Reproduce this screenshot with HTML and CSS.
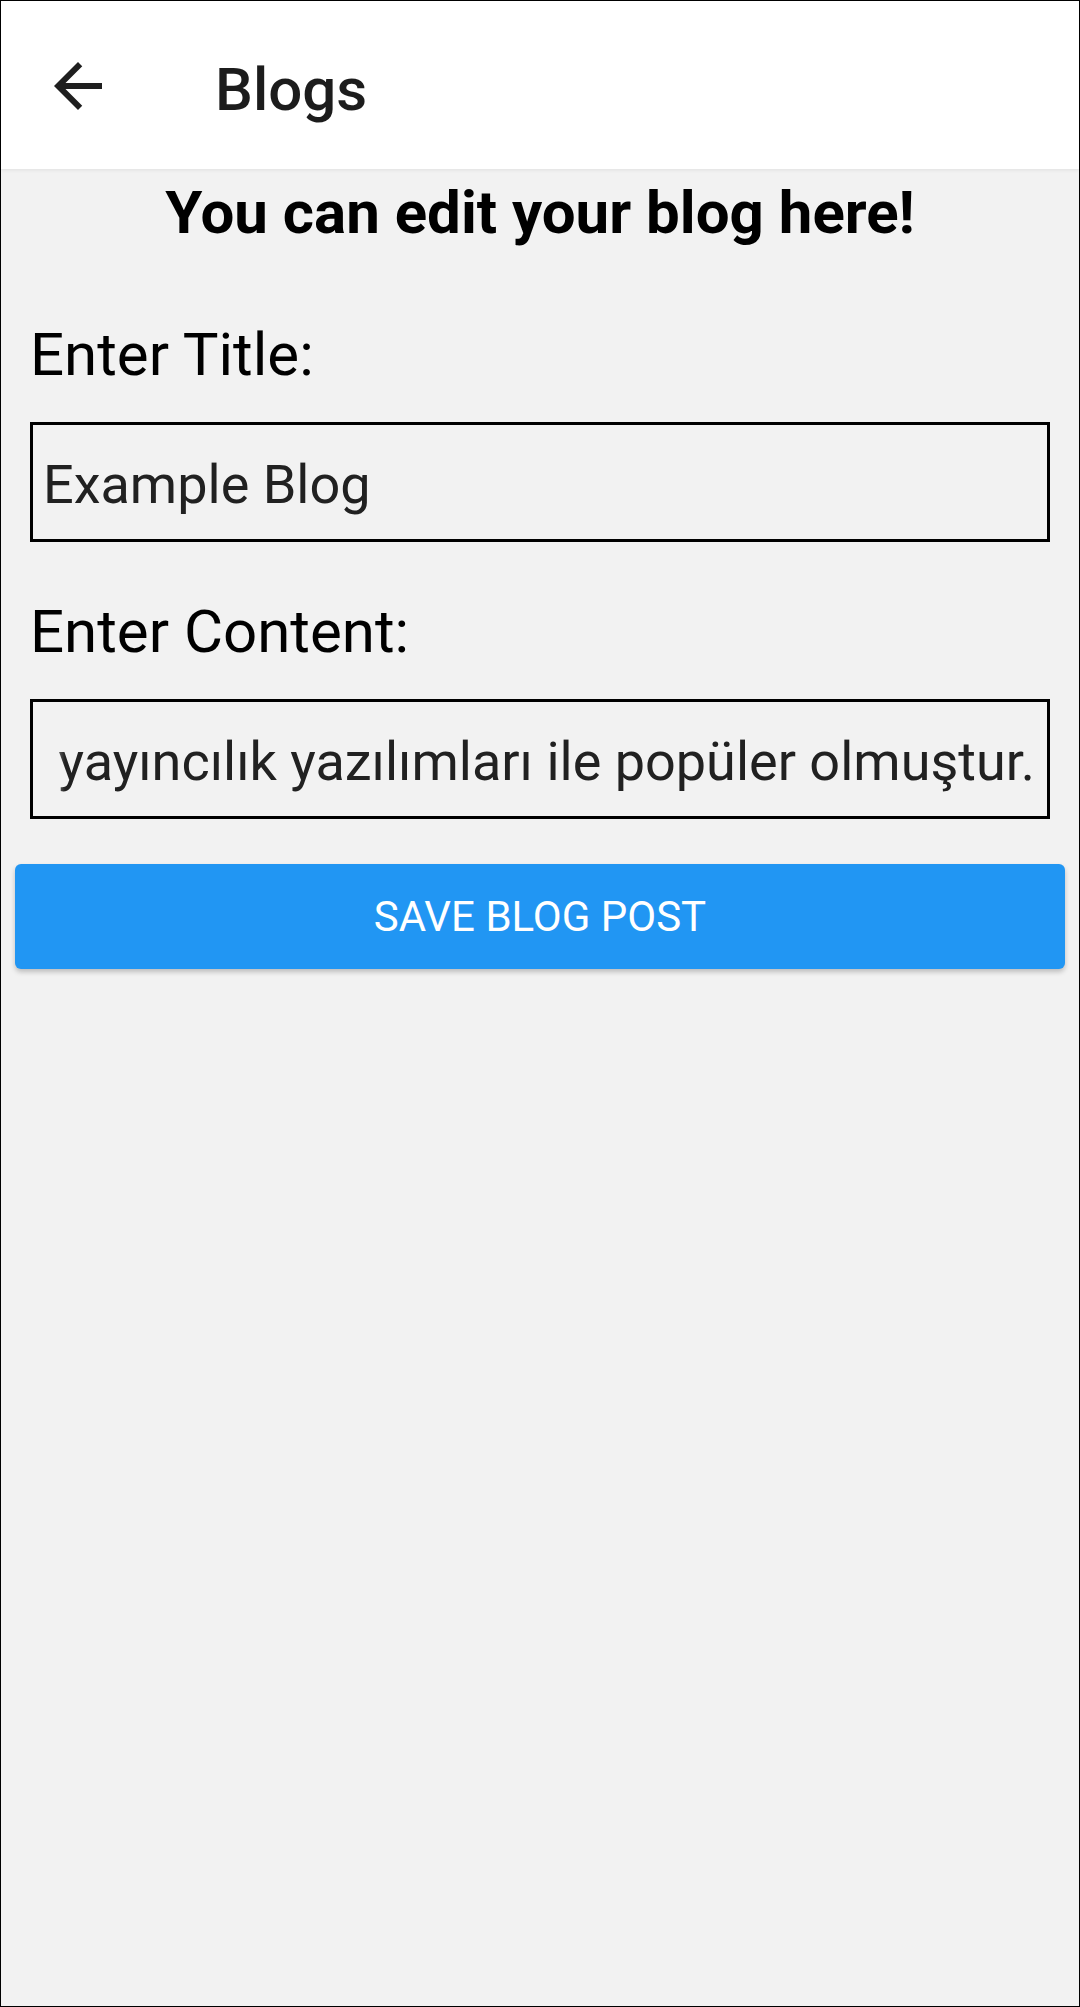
FILE: index.html
```html
<!DOCTYPE html>
<html lang="en">
<head>
  <meta charset="UTF-8" />
  <meta name="viewport" content="width=device-width, initial-scale=1" />
  <title>Blogs</title>
  <link rel="stylesheet" href="styles.css">
</head>
<body>
  <!-- App Bar -->
  <header class="app-bar">
    <svg class="back-icon" viewBox="0 0 24 24" aria-hidden="true">
      <path d="M20 11H7.83l5.59-5.59L12 4l-8 8 8 8 1.41-1.41L7.83 13H20v-2z" />
    </svg>
    <span class="app-title">Blogs</span>
  </header>

  <h1 class="page-heading">You can edit your blog here!</h1>

  <!-- Edit Form -->
  <form class="edit-form">
    <div class="form-group">
      <label class="field-label">Enter Title:</label>
      <div class="field">
        <div class="field-text">Example Blog</div>
      </div>
    </div>
    <div class="form-group">
      <label class="field-label">Enter Content:</label>
      <div class="field">
        <div class="field-text scrolled">Aldus PageMaker gibi Lorem Ipsum sürümleri içeren masaüstü yayıncılık yazılımları ile popüler olmuştur.</div>
      </div>
    </div>
    <button type="button" class="save-button">Save Blog Post</button>
  </form>
</body>
</html>
```

FILE: styles.css
```css
/* Global Styles */
html, body {
  margin: 0;
  padding: 0;
}
body {
  box-sizing: border-box;
  height: 2007px;
  border: 1px solid #000;
  background: #f2f2f2;
  font-family: Roboto, "Noto Sans", sans-serif;
  color: #000;
  overflow: hidden;
}
/* App Bar */
.app-bar {
  box-sizing: border-box;
  height: 168px;
  display: flex;
  align-items: flex-start;
  padding-top: 49px;
  background: #fff;
  box-shadow: 0 1px 4px rgba(0, 0, 0, 0.08);
  position: relative;
}
.back-icon {
  width: 72px;
  height: 72px;
  margin-left: 41px;
  fill: #1f1f1f;
}
.app-title {
  margin-left: 101px;
  margin-top: 5px;
  font-size: 60px;
  line-height: 70px;
  font-weight: 500;
  color: #1c1c1c;
}
/* Heading */
.page-heading {
  margin: 9px 0 0;
  text-align: center;
  font-size: 60px;
  line-height: 70px;
  font-weight: 700;
}
/* Form */
.edit-form {
  display: flex;
  flex-direction: column;
  padding: 0 14px;
}
.form-group {
  display: flex;
  flex-direction: column;
  padding: 0 15px;
}
.form-group:first-child {
  margin-top: 72px;
}
.form-group + .form-group {
  margin-top: 55px;
}
.field-label {
  font-size: 60px;
  line-height: 70px;
  margin-bottom: 32px;
}
.field {
  box-sizing: border-box;
  height: 120px;
  border: 3px solid #000;
  padding: 4px 12px 0 10px;
  display: flex;
  align-items: center;
}
.field-text {
  flex: 1;
  font-size: 54px;
  color: #212121;
  white-space: nowrap;
  overflow: hidden;
}
/* long content is scrolled to its end, like the native input */
.field-text.scrolled {
  display: flex;
  justify-content: flex-end;
  -webkit-mask-image: linear-gradient(to right, transparent 0, #000 22px);
  mask-image: linear-gradient(to right, transparent 0, #000 22px);
}
.save-button {
  margin-top: 45px;
  height: 105px;
  border: none;
  border-radius: 6px;
  background: #2196f3;
  color: #fff;
  font-family: Roboto, sans-serif;
  font-size: 42px;
  font-weight: 400;
  text-transform: uppercase;
  box-shadow: 0 3px 5px rgba(0, 0, 0, 0.22);
  cursor: pointer;
}
```
